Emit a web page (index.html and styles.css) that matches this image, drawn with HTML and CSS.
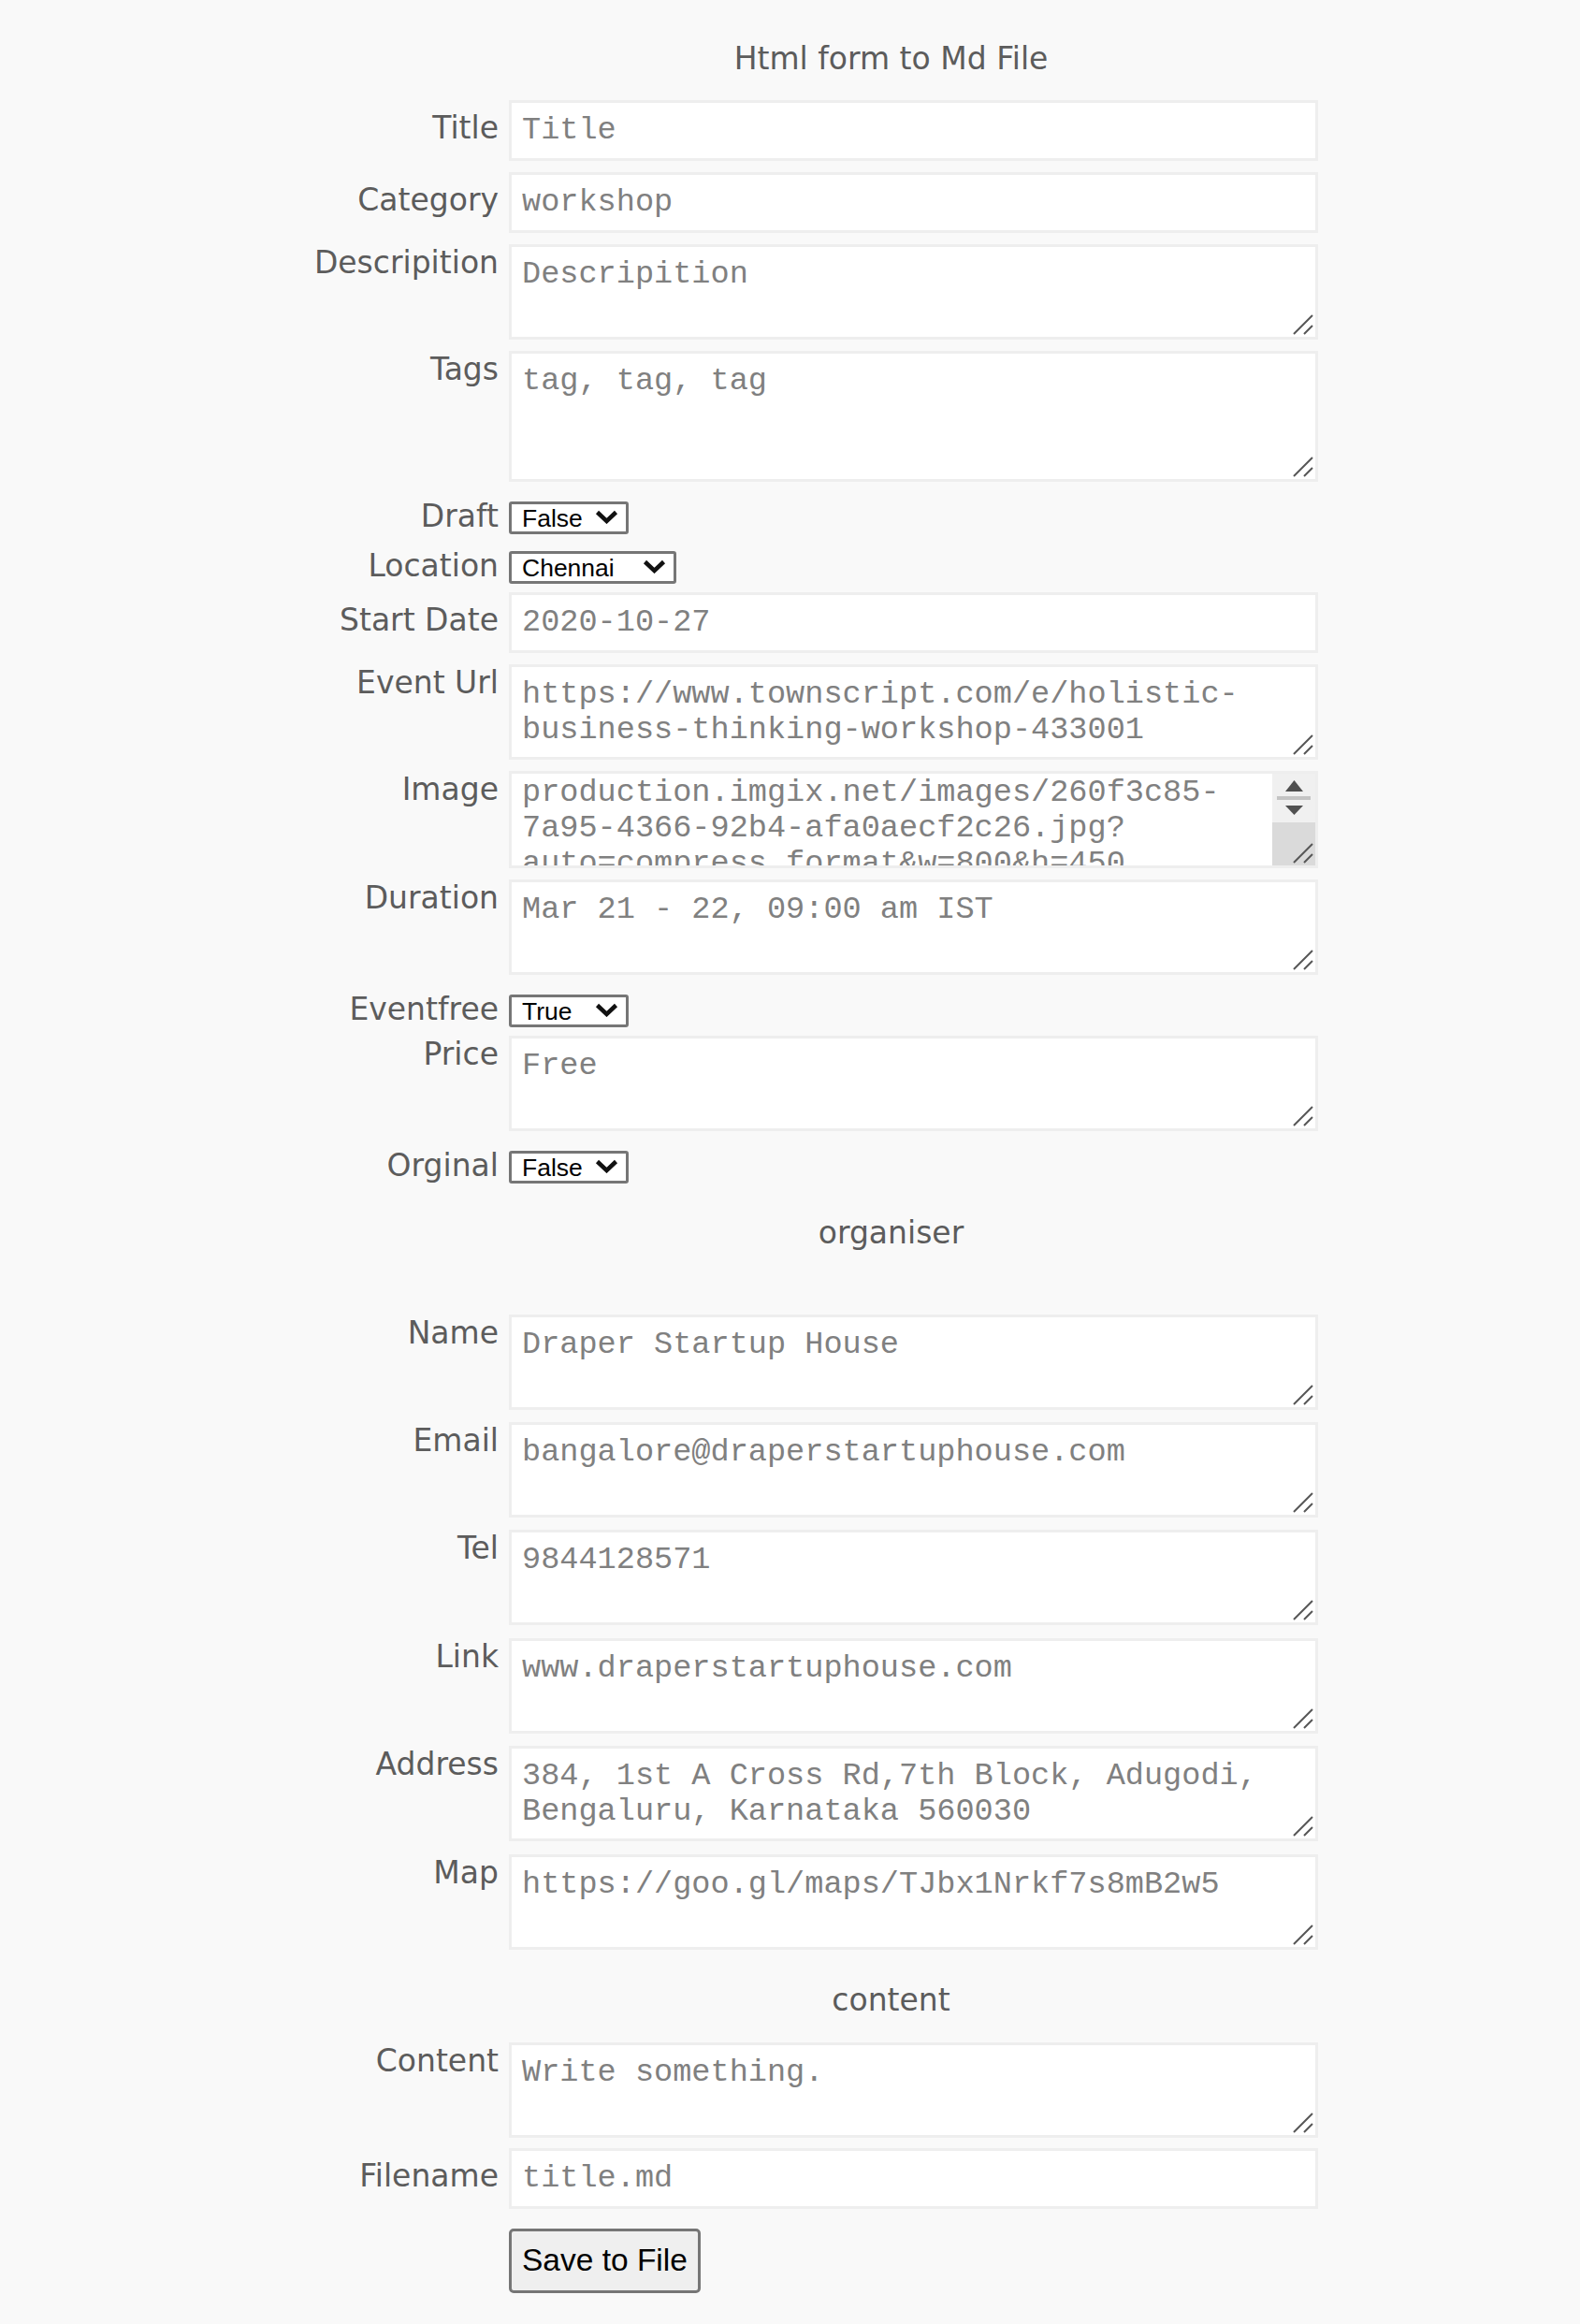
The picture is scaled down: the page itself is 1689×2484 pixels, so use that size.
FILE: index.html
```html
<!DOCTYPE html>
<html lang="en">
<head>
<meta charset="utf-8">
<title>Html form to Md File</title>
<link rel="stylesheet" href="styles.css">
</head>
<body>
<form class="form">
  <h3 class="heading h-top">Html form to Md File</h3>

  <div class="row"><label class="lbl">Title</label><input class="field" type="text" value="Title"></div>
  <div class="row"><label class="lbl">Category</label><input class="field" type="text" value="workshop"></div>
  <div class="row top"><label class="lbl">Descripition</label><span class="tw"><textarea class="area" spellcheck="false">Descripition</textarea><svg class="grip" width="22" height="22" viewBox="0 0 22 22"><path d="M21 1L1 21M21 12L12 21"/></svg></span></div>
  <div class="row top"><label class="lbl">Tags</label><span class="tw"><textarea class="area tall" spellcheck="false">tag, tag, tag</textarea><svg class="grip" width="22" height="22" viewBox="0 0 22 22"><path d="M21 1L1 21M21 12L12 21"/></svg></span></div>
  <div class="row sel"><label class="lbl">Draft</label><span class="sw"><select class="pick short"><option>False</option><option>True</option></select><svg class="chev" width="25" height="15" viewBox="0 0 25 15"><path d="M2.5 2.5L12.5 12L22.5 2.5"/></svg></span></div>
  <div class="row sel"><label class="lbl">Location</label><span class="sw"><select class="pick long"><option>Chennai</option><option>Bangalore</option></select><svg class="chev" width="25" height="15" viewBox="0 0 25 15"><path d="M2.5 2.5L12.5 12L22.5 2.5"/></svg></span></div>
  <div class="row"><label class="lbl">Start Date</label><input class="field" type="text" value="2020-10-27"></div>
  <div class="row top"><label class="lbl">Event Url</label><span class="tw"><textarea class="area" spellcheck="false">https://www.townscript.com/e/holistic-business-thinking-workshop-433001</textarea><svg class="grip" width="22" height="22" viewBox="0 0 22 22"><path d="M21 1L1 21M21 12L12 21"/></svg></span></div>
  <div class="row top"><label class="lbl">Image</label><span class="tw"><textarea class="area ta-img" spellcheck="false">https://townscript-production.imgix.net/images/260f3c85-7a95-4366-92b4-afa0aecf2c26.jpg?auto=compress,format&amp;w=800&amp;h=450</textarea><span class="vbar"><svg class="arr" width="19" height="12" viewBox="0 0 19 12"><polygon points="9.5,0 19,12 0,12"/></svg><span class="vline"></span><svg class="arr arr-down" width="19" height="10" viewBox="0 0 19 10"><polygon points="0,0 19,0 9.5,10"/></svg><span class="corner"><svg class="grip" width="22" height="22" viewBox="0 0 22 22"><path d="M21 1L1 21M21 12L12 21"/></svg></span></span></span></div>
  <div class="row top"><label class="lbl">Duration</label><span class="tw"><textarea class="area" spellcheck="false">Mar 21 - 22, 09:00 am IST</textarea><svg class="grip" width="22" height="22" viewBox="0 0 22 22"><path d="M21 1L1 21M21 12L12 21"/></svg></span></div>
  <div class="row sel"><label class="lbl">Eventfree</label><span class="sw"><select class="pick short"><option>True</option><option>False</option></select><svg class="chev" width="25" height="15" viewBox="0 0 25 15"><path d="M2.5 2.5L12.5 12L22.5 2.5"/></svg></span></div>
  <div class="row top"><label class="lbl">Price</label><span class="tw"><textarea class="area" spellcheck="false">Free</textarea><svg class="grip" width="22" height="22" viewBox="0 0 22 22"><path d="M21 1L1 21M21 12L12 21"/></svg></span></div>
  <div class="row sel"><label class="lbl">Orginal</label><span class="sw"><select class="pick short"><option>False</option><option>True</option></select><svg class="chev" width="25" height="15" viewBox="0 0 25 15"><path d="M2.5 2.5L12.5 12L22.5 2.5"/></svg></span></div>

  <h3 class="heading h-org">organiser</h3>

  <div class="row top org"><label class="lbl">Name</label><span class="tw"><textarea class="area" spellcheck="false">Draper Startup House</textarea><svg class="grip" width="22" height="22" viewBox="0 0 22 22"><path d="M21 1L1 21M21 12L12 21"/></svg></span></div>
  <div class="row top org"><label class="lbl">Email</label><span class="tw"><textarea class="area" spellcheck="false">bangalore@draperstartuphouse.com</textarea><svg class="grip" width="22" height="22" viewBox="0 0 22 22"><path d="M21 1L1 21M21 12L12 21"/></svg></span></div>
  <div class="row top org"><label class="lbl">Tel</label><span class="tw"><textarea class="area" spellcheck="false">9844128571</textarea><svg class="grip" width="22" height="22" viewBox="0 0 22 22"><path d="M21 1L1 21M21 12L12 21"/></svg></span></div>
  <div class="row top org"><label class="lbl">Link</label><span class="tw"><textarea class="area" spellcheck="false">www.draperstartuphouse.com</textarea><svg class="grip" width="22" height="22" viewBox="0 0 22 22"><path d="M21 1L1 21M21 12L12 21"/></svg></span></div>
  <div class="row top org"><label class="lbl">Address</label><span class="tw"><textarea class="area" spellcheck="false">384, 1st A Cross Rd,7th Block, Adugodi, Bengaluru, Karnataka 560030</textarea><svg class="grip" width="22" height="22" viewBox="0 0 22 22"><path d="M21 1L1 21M21 12L12 21"/></svg></span></div>
  <div class="row top org"><label class="lbl">Map</label><span class="tw"><textarea class="area" spellcheck="false">https://goo.gl/maps/TJbx1Nrkf7s8mB2w5</textarea><svg class="grip" width="22" height="22" viewBox="0 0 22 22"><path d="M21 1L1 21M21 12L12 21"/></svg></span></div>

  <h3 class="heading h-content">content</h3>

  <div class="row top gap-content"><label class="lbl">Content</label><span class="tw"><textarea class="area" spellcheck="false">Write something.</textarea><svg class="grip" width="22" height="22" viewBox="0 0 22 22"><path d="M21 1L1 21M21 12L12 21"/></svg></span></div>
  <div class="row gap-btn"><label class="lbl">Filename</label><input class="field" type="text" value="title.md"></div>
  <div class="row top"><span class="lbl"></span><button class="save" type="button">Save to File</button></div>
</form>
<script src="script.js"></script>
</body>
</html>
```

FILE: styles.css
```css
html, body {
  margin: 0;
  padding: 0;
  background: #f9f9f9;
}

body {
  font-family: "DejaVu Sans", Verdana, sans-serif;
  color: #5c5c5c;
}

.form {
  display: flex;
  flex-direction: column;
  align-items: flex-start;
  width: 1116px;
  margin: 0 0 0 293px;
  padding-top: 43.4px;
}

.heading {
  box-sizing: border-box;
  width: 913px;
  margin: 0 0 0 203px;
  font-size: 33px;
  font-weight: normal;
  line-height: normal;
  text-align: center;
}

.h-top { margin-bottom: 24.2px; }
.h-org { margin-top: 24.8px; margin-bottom: 67.2px; }
.h-content { margin-top: 21.3px; margin-bottom: 25.6px; }

.row {
  display: flex;
  align-items: baseline;
  margin-bottom: 12px;
}

.row.top { align-items: flex-start; }
.row.sel { padding-top: 5px; margin-bottom: 9px; }
.row.org { margin-bottom: 13.4px; }
.row.gap-content { margin-bottom: 11px; }
.row.gap-btn { margin-bottom: 21px; }

.lbl {
  flex-shrink: 0;
  width: 240px;
  margin-right: 11px;
  font-size: 33px;
  line-height: normal;
  text-align: right;
  color: #5c5c5c;
}

.field {
  box-sizing: border-box;
  width: 865px;
  height: 65px;
  margin: 0;
  padding: 0 11px;
  border: 3px solid #eeeeee;
  border-radius: 0;
  background: #ffffff;
  font-family: "Liberation Mono", "Courier New", monospace;
  font-size: 33.6px;
  line-height: normal;
  color: #808080;
  outline: none;
}

.tw {
  position: relative;
  display: block;
  width: 865px;
}

.area {
  display: block;
  box-sizing: border-box;
  width: 865px;
  height: 102px;
  margin: 0;
  padding: 10px 11px;
  border: 3px solid #eeeeee;
  border-radius: 0;
  background: #ffffff;
  font-family: "Liberation Mono", "Courier New", monospace;
  font-size: 33.6px;
  line-height: normal;
  color: #808080;
  resize: none;
  overflow: hidden;
  outline: none;
}

.area.tall { height: 140px; }

.area.ta-img {
  height: 104px;
  padding-right: 57px;
}

.grip {
  position: absolute;
  right: 5px;
  bottom: 5px;
  fill: none;
  stroke: #575757;
  stroke-width: 2;
}

.vbar {
  position: absolute;
  top: 3px;
  right: 3px;
  bottom: 3px;
  width: 46px;
  display: flex;
  flex-direction: column;
  align-items: center;
  background: #f0f0f0;
}

.arr {
  display: block;
  flex-shrink: 0;
  margin-top: 7px;
  fill: #505050;
}

.vline {
  display: block;
  flex-shrink: 0;
  width: 36px;
  height: 4px;
  margin-top: 5px;
  background: #c4c4c4;
}

.arr.arr-down { margin-top: 6px; }

.corner {
  position: relative;
  align-self: stretch;
  flex-shrink: 0;
  height: 46px;
  margin-top: auto;
  background: #dadada;
}

.corner .grip {
  right: 2px;
  bottom: 2px;
}

.sw {
  position: relative;
  display: inline-block;
}

.pick {
  -webkit-appearance: none;
  appearance: none;
  box-sizing: border-box;
  height: 35px;
  margin: 0;
  padding: 0 11px;
  border: 3px solid #767676;
  border-radius: 3px;
  background: #ffffff;
  font-family: "Liberation Sans", Arial, sans-serif;
  font-size: 26.5px;
  color: #000000;
  outline: none;
}

.pick.short { width: 128px; }
.pick.long { width: 179px; }

.chev {
  position: absolute;
  right: 11px;
  top: 9px;
  fill: none;
  stroke: #111111;
  stroke-width: 4.5;
  pointer-events: none;
}

.save {
  box-sizing: border-box;
  height: 69px;
  margin: 0;
  padding: 0 11px;
  border: 3px solid #767676;
  border-radius: 5px;
  background: #efefef;
  font-family: "Liberation Sans", Arial, sans-serif;
  font-size: 33.5px;
  color: #000000;
}
```

FILE: script.js
```js
document.querySelector('.ta-img').scrollTop = 47;
```
